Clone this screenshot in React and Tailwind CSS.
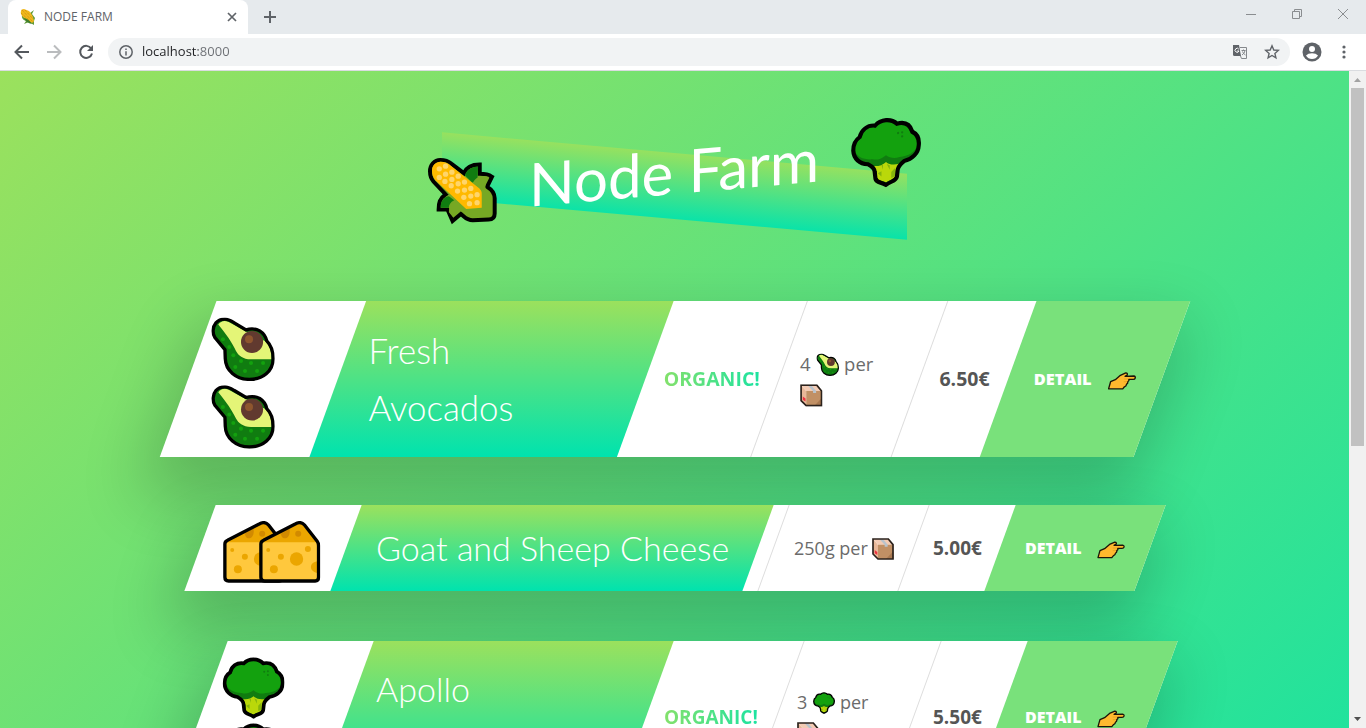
import React from 'react';

function Corn({ className }) {
  return (
    <svg viewBox="25 167 208 200" className={className} aria-hidden="true">
      <g transform="translate(129 267) skewY(5) translate(-129 -267)">
        <path
          d="M31 210 C31 192 44 176 62 176 C78 176 88 181 96 188 L133 216 C140 200 158 190 181 190 L181 218 C194 218 206 219 218 227 L203 257 C218 266 226 278 226 292 V338 C226 350 220 356 208 356 L160 358 C140 358 134 346 124 339 L99 360 L84 326 L57 326 C57 306 60 292 78 280 L42 242 C34 232 31 222 31 210Z"
          fill="#76a824"
          stroke="#000"
          strokeWidth="12"
        />
        <path d="M136 222 C144 202 160 197 176 196 L174 240 L158 244Z" fill="#107c10" />
        <path d="M63 320 C63 298 76 286 88 286 L104 298 C92 304 88 312 88 320Z" fill="#107c10" />
        <path d="M160 246 C168 226 192 220 209 228 C196 242 196 262 202 272Z" fill="#76a824" />
        <path d="M88 334 C88 310 104 300 116 304 L140 326 C120 326 108 334 101 350Z" fill="#76a824" />
        <path d="M37 208 C37 194 48 182 63 182 C76 182 86 186 94 194 L180 262 C186 268 187 272 187 278 V320 L140 324 L48 238 C40 230 37 220 37 208Z" fill="#ffb900" />
        <g fill="#ffd56b">
          {[
            [59, 203], [78, 195], [97, 213], [78, 219], [59, 229], [116, 225], [97, 235],
            [76, 241], [135, 243], [116, 248], [95, 254], [154, 262], [135, 267], [114, 270],
            [173, 281], [154, 285], [133, 289], [173, 305], [150, 308],
          ].map(([x, y]) => (
            <circle key={`${x}-${y}`} cx={x} cy={y} r="8" />
          ))}
        </g>
      </g>
    </svg>
  );
}

function Broccoli({ className }) {
  const outline =
    'M248 507 C262 507 270 512 277 519 C298 515 312 525 318 544 C332 552 337 565 335 582 C334 602 318 617 296 620 C285 628 280 634 279 642 L277 660 C275 671 262 670 248 679 C234 670 222 671 220 660 L218 642 C218 634 210 626 200 620 C178 617 162 602 161 580 C161 565 168 552 178 546 C182 528 198 515 219 519 C226 511 236 507 248 507Z';
  return (
    <svg viewBox="155 500 186 186" className={className} aria-hidden="true">
      <path d={outline} fill="#107c10" />
      <path d="M248 510 C262 510 268 515 275 523 C296 520 308 530 313 546 C328 555 330 566 330 582 C326 598 308 608 284 608 C270 612 258 608 248 600 C238 608 226 612 212 608 C190 608 170 598 166 582 C166 566 170 555 183 548 C187 532 200 520 221 523 C228 514 236 510 248 510Z" fill="#13a10e" />
      <path d="M216 626 C226 628 240 626 248 618 C256 626 270 628 282 626 L274 644 V658 C270 667 258 666 248 673 C238 666 226 667 224 658 V644Z" fill="#bad80a" />
      <path d="M236 626 L240 624 V638Z M250 624 L258 628 V640Z M262 646 L272 636 V658 L262 662Z M226 646 L236 642 V656Z" fill="#86b50c" />
      <g fill="#107c10">
        <circle cx="280" cy="544" r="3" />
        <circle cx="291" cy="543" r="3" />
        <circle cx="291" cy="554" r="3" />
      </g>
      <path d={outline} fill="none" stroke="#000" strokeWidth="11" />
    </svg>
  );
}

function Avocado({ className }) {
  const outline =
    'M222 87 C232 87 240 92 250 98 L285 119 C298 115 315 116 326 122 C340 131 345 143 347 152 C360 165 366 180 366 205 C366 242 335 267 295 267 C255 267 224 240 223 205 L222 178 L192 142 C184 130 185 110 195 98 C202 90 212 87 222 87Z';
  return (
    <svg viewBox="181 82 190 190" className={className} aria-hidden="true">
      <path d={outline} fill="#107c10" />
      <path d="M202 103 C209 93 220 90 232 95 L285 124 L344 154 C358 170 362 186 361 207 L300 207 C275 207 262 195 255 182 C245 160 225 130 202 103Z" fill="#e4f577" />
      <circle cx="303" cy="155" r="33" fill="#613a2f" />
      <circle cx="294" cy="147" r="12" fill="#8e562e" />
      <g fill="#13a10e">
        {[[216, 147], [235, 170], [247, 195], [270, 212], [253, 230], [282, 242], [300, 218], [318, 242], [336, 218]].map(([x, y]) => (
          <circle key={`${x}-${y}`} cx={x} cy={y} r="6" />
        ))}
      </g>
      <path d={outline} fill="none" stroke="#000" strokeWidth="10" />
    </svg>
  );
}

function Cheese({ className }) {
  const outline =
    'M269 160 C269 154 272 151 277 149 L372 100 C383 94 393 95 400 103 L438 152 C441 156 442 160 442 165 V260 Q442 271 432 271 H280 Q269 271 269 260Z';
  return (
    <svg viewBox="263 91 184 186" className={className} aria-hidden="true">
      <path d={outline} fill="#ffc83d" />
      <path d="M271 155 L277 149 L372 100 C383 94 393 95 400 103 L440 155Z" fill="#eba600" />
      <path d="M330 127 L355 114 C358 132 350 143 341 143 C334 143 328 136 330 127Z" fill="#d18a00" />
      <circle cx="381" cy="129" r="9" fill="#d18a00" />
      <g fill="#eba600">
        <circle cx="291" cy="178" r="6" />
        <circle cx="329" cy="198" r="9" />
        <circle cx="376" cy="205" r="20" />
        <circle cx="410" cy="175" r="9" />
        <circle cx="308" cy="236" r="12" />
        <path d="M440 212 C412 214 412 244 440 247Z" />
      </g>
      <path d={outline} fill="none" stroke="#000" strokeWidth="10" />
    </svg>
  );
}

function Package({ className }) {
  return (
    <svg viewBox="570 282 66 66" className={className} aria-hidden="true">
      <path d="M573 285 L588 302 V345 L573 330Z" fill="#e8b798" />
      <path d="M573 285 H620 L634 302 H588Z" fill="#f3cbb4" />
      <path d="M588 302 H634 V345 H588Z" fill="#c19065" />
      <path d="M634 322 V345 H612Z" fill="#a87850" />
      <path d="M592 285 H603 L617 302 V308 H608 V302Z" fill="#b9c3cc" />
      <path d="M578 318 L586 324 V333 L578 328Z" fill="#ef3340" />
      <path d="M573 285 H619 L633 302 V345 H588 L573 330Z" fill="none" stroke="#2b221c" strokeWidth="5" />
    </svg>
  );
}

function PointingHand({ className }) {
  return (
    <svg viewBox="684 247 85 54" className={className} aria-hidden="true">
      <path
        d="M687 297 L693 276 L707 270 L722 257 L738 250 Q745 251 742 256 L736 260 L762 259 Q767 260 766 265 Q765 269 760 269 L747 269 Q749 273 744 276 Q745 281 740 284 Q740 289 734 291 L729 297Z"
        fill="#ffb92e"
        stroke="#1c1508"
        strokeWidth="4"
        strokeLinejoin="round"
      />
      <path d="M732 268 H745 M732 276 H742" fill="none" stroke="#e09a1c" strokeWidth="2" />
    </svg>
  );
}

const emojis = { avocado: Avocado, cheese: Cheese, broccoli: Broccoli };

const products = [
  { name: 'Fresh\nAvocados', emoji: 'avocado', stacked: true, organic: true, amount: '4', unit: 'avocado', price: '6.50€', active: true },
  { name: 'Goat and Sheep Cheese', emoji: 'cheese', stacked: false, organic: false, amount: '250g', unit: null, price: '5.00€', active: false },
  { name: 'Apollo\nBroccoli', emoji: 'broccoli', stacked: true, organic: true, amount: '3', unit: 'broccoli', price: '5.50€', active: false },
];

function Card({ product }) {
  const Picture = emojis[product.emoji];
  const Unit = product.unit ? emojis[product.unit] : null;
  return (
    <article
      className={`flex -skew-x-20 bg-white text-lg leading-[30px] text-[#6b6b6b] shadow-[0_30px_60px_10px_rgba(0,0,0,0.2)] ${product.active ? 'scale-[1.025]' : ''}`}
    >
      <div className="w-[146px] shrink-0 pt-3.5 pb-1.5 pl-6">
        <div className={`flex skew-x-20 ${product.stacked ? 'flex-col' : ''}`}>
          <span className="flex h-[66px] items-center">
            <Picture className="size-[62px]" />
          </span>
          <span className={`flex h-[66px] items-center ${product.stacked ? '' : '-ml-[26px]'}`}>
            <Picture className="size-[62px]" />
          </span>
        </div>
      </div>
      <div className="flex min-w-0 flex-1 items-center bg-linear-to-b/srgb from-[#9be15d] to-[#00e3ae] pl-[30px]">
        <h2 className="w-full skew-x-20 pr-4 font-['Lato',sans-serif] text-[34px] leading-[56px] font-light whitespace-pre-line text-white">
          {product.name}
        </h2>
      </div>
      <div className={`flex shrink-0 items-center justify-center border-r border-[#ddd] ${product.organic ? 'w-[131px]' : 'w-4'}`}>
        {product.organic && (
          <p className="skew-x-20 bg-linear-to-r/srgb from-[#84e16b] to-[#1be3a1] bg-clip-text text-[19px] font-bold text-transparent">
            ORGANIC!
          </p>
        )}
      </div>
      <div className={`flex shrink-0 items-center border-r border-[#ddd] pl-5 ${product.unit ? 'w-[137px]' : 'w-[140px]'}`}>
        <p className={`skew-x-20 ${product.unit ? 'pr-6' : ''}`}>
          {product.amount}
          {Unit && <Unit className="ml-1.5 inline size-[22px] align-[-5px]" />}
          {' per '}
          <Package className="inline size-[22px] align-[-5px]" />
        </p>
      </div>
      <div className="flex w-[86px] shrink-0 items-center justify-center">
        <p className="skew-x-20 text-[19px] font-bold text-[#555]">{product.price}</p>
      </div>
      <a href="#detail" className="flex w-[150px] shrink-0 items-center justify-center bg-[#79e17b] text-base font-extrabold text-white">
        <span className="flex skew-x-20 items-center gap-4">
          DETAIL
          <PointingHand className="mt-1 h-[18px] w-7" />
        </span>
      </a>
    </article>
  );
}

function TabStrip() {
  return (
    <div className="flex h-[34px] items-stretch bg-[#e6eaed] pl-2">
      <div className="flex w-60 items-center rounded-t-lg bg-white pr-2.5 pl-3">
        <svg viewBox="0 0 16 16" className="size-4" aria-hidden="true">
          <path d="M2 6 Q1 10 6 12 L4 15 L9 13 L14 16 L14 12 L15 9 L12 5 L14 1 L10 4Z" fill="#5f9a3a" />
          <path d="M1 2 Q1 0 4 0 L9 2 Q13 6 14 12 Q13 15 10 13 L3 8 Q0 5 1 2Z" fill="#f0b81c" />
          <path d="M2 1 L13 13 M5 1 L13 10 M1 4 L10 12" stroke="#c98a10" strokeWidth="1" strokeDasharray="1 1" />
          <path d="M4 9 Q9 10 12 15 Q6 14 4 9Z" fill="#3f7d2b" />
        </svg>
        <span className="ml-2 flex-1 text-xs text-[#5f6368]">NODE FARM</span>
        <button type="button" aria-label="Close tab" className="flex size-3 items-center justify-center">
          <svg viewBox="0 0 12 12" className="size-3" fill="none" stroke="#5f6368" strokeWidth="1.7">
            <path d="M2 2 L10 10 M10 2 L2 10" />
          </svg>
        </button>
      </div>
      <button type="button" aria-label="New tab" className="ml-4 flex items-center">
        <svg viewBox="0 0 12 12" className="size-3" stroke="#5f6368" strokeWidth="2">
          <path d="M6 0 V12 M0 6 H12" />
        </svg>
      </button>
      <div className="ml-auto flex h-7 items-center gap-9 pr-[18px]">
        <button type="button" aria-label="Minimize">
          <svg viewBox="0 0 10 10" className="size-2.5" stroke="#8a8d90">
            <path d="M0 5.5 H10" />
          </svg>
        </button>
        <button type="button" aria-label="Restore">
          <svg viewBox="0 0 10 10" className="size-2.5" fill="none" stroke="#8a8d90">
            <path d="M.5 2.5 H7.5 V9.5 H.5Z M2.5 2.5 V.5 H9.5 V7.5 H7.5" />
          </svg>
        </button>
        <button type="button" aria-label="Close">
          <svg viewBox="0 0 10 10" className="size-2.5" stroke="#8a8d90">
            <path d="M0 0 L10 10 M10 0 L0 10" />
          </svg>
        </button>
      </div>
    </div>
  );
}

function Toolbar() {
  return (
    <div className="flex h-[37px] items-center border-b border-[#dadce0] bg-white pr-4 pl-3.5">
      <div className="flex items-center gap-4">
        <button type="button" aria-label="Back">
          <svg viewBox="0 0 16 16" className="size-4" fill="none" stroke="#54585d" strokeWidth="2">
            <path d="M15 8 H2 M8 1.5 L1.5 8 L8 14.5" />
          </svg>
        </button>
        <button type="button" aria-label="Forward">
          <svg viewBox="0 0 16 16" className="size-4" fill="none" stroke="#babcbe" strokeWidth="2">
            <path d="M1 8 H14 M8 1.5 L14.5 8 L8 14.5" />
          </svg>
        </button>
        <button type="button" aria-label="Reload">
          <svg viewBox="0 0 16 16" className="size-4" fill="none" stroke="#54585d" strokeWidth="2">
            <path d="M13.2 4.5 A6 6 0 1 0 14 9.5" />
            <path d="M15 1 V7 H9Z" fill="#54585d" stroke="none" />
          </svg>
        </button>
      </div>
      <div className="ml-3.5 flex h-7 flex-1 items-center rounded-full bg-[#f1f3f4] pr-2.5 pl-[11px]">
        <svg viewBox="0 0 14 14" className="size-3.5" fill="none" stroke="#5f6368" strokeWidth="1.5" aria-hidden="true">
          <circle cx="7" cy="7" r="6.2" />
          <path d="M7 6.2 V10.5 M7 3.4 V5" />
        </svg>
        <input
          type="text"
          aria-label="Address"
          defaultValue="localhost:8000"
          className="ml-[9px] min-w-0 flex-1 bg-linear-[90deg,#202124_56px,#6b6e73_56px] bg-clip-text text-[13px] text-transparent outline-none"
        />
        <button type="button" aria-label="Translate" className="mr-4">
          <svg viewBox="0 0 16 16" className="size-4" aria-hidden="true">
            <path d="M1 1 H7 L9 12 H2.500 Q1 12 1 10.500Z" fill="#5f6368" />
            <path d="M8 3.500 H14.500 V14.500 H9.500 L8.500 12" fill="none" stroke="#85888c" />
            <path d="M9.500 6.500 H13.500 M11.500 5.500 V6.500 M10 11 Q13 9 13 6.500 M10.500 7.500 Q11 9.500 13.500 11" fill="none" stroke="#85888c" />
            <path d="M6.800 5.200 A2 2 0 1 0 7 7 H5.200" fill="none" stroke="#fff" />
          </svg>
        </button>
        <button type="button" aria-label="Bookmark">
          <svg viewBox="0 0 16 16" className="size-4" fill="none" stroke="#5f6368" strokeWidth="1.4">
            <path d="M8 1.800 L9.800 6 L14.300 6.400 L10.900 9.400 L11.900 13.800 L8 11.500 L4.100 13.800 L5.100 9.400 L1.700 6.400 L6.200 6Z" />
          </svg>
        </button>
      </div>
      <button type="button" aria-label="Profile" className="ml-3">
        <svg viewBox="0 0 20 20" className="size-5">
          <circle cx="10" cy="10" r="9.500" fill="#5f6368" />
          <circle cx="10" cy="7" r="3" fill="#fff" />
          <path d="M4 13.500 Q6 11.300 10 11.300 Q14 11.300 16 13.500 Q14 17 10 17 Q6 17 4 13.500Z" fill="#fff" />
        </svg>
      </button>
      <button type="button" aria-label="Menu" className="ml-4">
        <svg viewBox="0 0 12 16" className="h-4 w-3" fill="#5f6368">
          <circle cx="6" cy="3" r="1.600" />
          <circle cx="6" cy="8" r="1.600" />
          <circle cx="6" cy="13" r="1.600" />
        </svg>
      </button>
    </div>
  );
}

function Scrollbar() {
  return (
    <div className="flex w-[17px] shrink-0 flex-col items-center bg-[#f1f1f1]" aria-hidden="true">
      <svg viewBox="0 0 17 17" className="size-[17px] shrink-0">
        <path d="M5 11 L8.500 7 L12 11Z" fill="#a3a3a3" />
      </svg>
      <div className="h-6/11 w-[13px] bg-[#c1c1c1]" />
      <svg viewBox="0 0 17 17" className="mt-auto size-[17px] shrink-0">
        <path d="M5 6 L8.500 10 L12 6Z" fill="#505050" />
      </svg>
    </div>
  );
}

export default function App() {
  return (
    <div className="flex h-screen flex-col overflow-hidden font-['Open_Sans',sans-serif]">
      <TabStrip />
      <Toolbar />
      <div className="flex min-h-0 flex-1">
        <main className="min-w-0 flex-1 overflow-hidden">
          <div className="min-h-[1143px] bg-linear-to-br/srgb from-[#9be15d] to-[#00e3ae] px-8 pt-16">
            <header className="flex justify-center">
              <h1 className="relative flex -skew-y-5 items-center gap-8 font-['Lato',sans-serif] text-6xl leading-[72px] text-white">
                <span className="absolute inset-x-3.5 top-[18px] h-[66px] skew-y-10 bg-linear-to-b/srgb from-[#9be15d] to-[#00e3ae] opacity-90" />
                <Corn className="relative h-[67px] w-[69px] overflow-visible" />
                <span className="relative">Node Farm</span>
                <Broccoli className="relative size-[70px]" />
              </h1>
            </header>
            <div className="mx-auto mt-24 flex max-w-[950px] flex-col gap-[50px]">
              {products.map((product) => (
                <Card key={product.name} product={product} />
              ))}
            </div>
          </div>
        </main>
        <Scrollbar />
      </div>
    </div>
  );
}
